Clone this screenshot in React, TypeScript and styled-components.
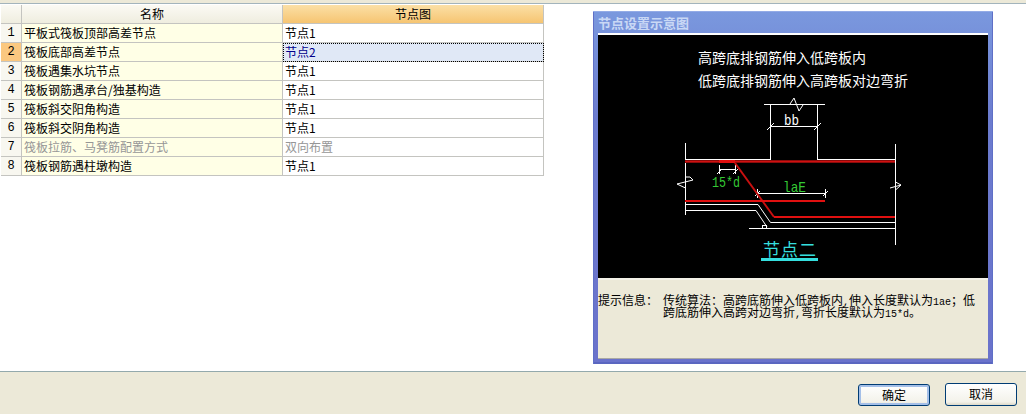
import React from 'react';
import styled, { createGlobalStyle } from 'styled-components';

const CJK = '"Noto Sans CJK SC", "Liberation Sans", sans-serif';
const MONO = '"Liberation Mono", monospace';

const GlobalStyle = createGlobalStyle`
  html, body {
    margin: 0;
    padding: 0;
    background: #ffffff;
    overflow: hidden;
  }
  body {
    font-family: ${CJK};
    font-size: 12px;
    color: #000000;
  }
`;

const Page = styled.div`
  width: 1026px;
  height: 414px;
  display: flex;
  flex-direction: column;
`;

const TopStrip = styled.div`
  height: 3px;
  background: #ece9d8;
  border-bottom: 1px solid #a3b4bc;
`;

const Main = styled.div`
  height: 367px;
  display: flex;
  align-items: flex-start;
`;

const Grid = styled.div`
  display: grid;
  grid-template-columns: 21px 261px 261px;
  grid-auto-rows: 19px;
  margin: 1px 0 0 1px;
`;

const HeaderCell = styled.div<{ $active?: boolean }>`
  border-right: 1px solid #c4c4c0;
  border-bottom: 1px solid #c4c4c0;
  background: ${(p) =>
    p.$active
      ? 'linear-gradient(#fbe0a6, #f6c572)'
      : 'linear-gradient(#fbfaf4, #efeddf)'};
  text-align: center;
  line-height: 17px;
`;

const RowNumber = styled.div<{ $selected?: boolean }>`
  border-right: 1px solid #c4c4c0;
  border-bottom: 1px solid #c4c4c0;
  background: ${(p) => (p.$selected ? '#fbc880' : '#f8f7f0')};
  text-align: center;
  font-family: ${MONO};
  font-size: 12px;
  line-height: 18px;
`;

const NameCell = styled.div<{ $disabled?: boolean }>`
  border-right: 1px solid #c4c4c0;
  border-bottom: 1px solid #c4c4c0;
  background: #ffffe6;
  padding-left: 2px;
  line-height: 17px;
  color: ${(p) => (p.$disabled ? '#969696' : '#000000')};
`;

const ValueCell = styled.div<{ $disabled?: boolean; $selected?: boolean }>`
  border-right: 1px solid #c4c4c0;
  border-bottom: 1px solid #c4c4c0;
  background: ${(p) => (p.$selected ? '#e0e8f6' : '#ffffff')};
  padding-left: 2px;
  line-height: 17px;
  color: ${(p) => (p.$selected ? '#00008b' : p.$disabled ? '#969696' : '#000000')};
  outline: ${(p) => (p.$selected ? '1px dotted #000000' : 'none')};
  outline-offset: -1px;
`;

const Panel = styled.div`
  width: 400px;
  height: 353px;
  margin: 7px 0 0 49px;
  padding: 0 5px 5px;
  box-sizing: border-box;
  display: flex;
  flex-direction: column;
  background: linear-gradient(#7a98de, #6c7ccf 30%, #6a72cb);
  border-top: 1px solid #93abe6;
  box-shadow: inset 1px 0 0 #5f6fc6, inset -1px 0 0 #5f6fc6, inset 0 -2px 0 #5a66c0;
`;

const PanelTitle = styled.div`
  height: 21px;
  line-height: 22px;
  font-size: 13px;
  font-weight: 700;
  color: #c9d8f5;
`;

const Diagram = styled.svg`
  display: block;
  flex: none;
  width: 390px;
  height: 243px;
  background: #000000;
  border-top: 2px solid #ffffff;
`;

const HintArea = styled.div`
  flex: 1;
  display: flex;
  background: #ece9d8;
  border-top: 2px solid #f4f2e8;
  border-bottom: 1px solid #a9a9a4;
  padding: 14px 0 0;
  line-height: 12px;
`;

const HintLabel = styled.div`
  width: 65px;
  flex: none;
`;

const HintBody = styled.div`
  flex: 1;
`;

const Latin = styled.span`
  font-family: ${MONO};
  font-size: 10px;
  line-height: 0;
`;

const Footer = styled.div`
  flex: 1;
  display: flex;
  justify-content: flex-end;
  align-items: flex-end;
  gap: 15px;
  padding: 0 9px 8px 0;
  background: #ece9d8;
  border-top: 1px solid #93a9ac;
`;

const DialogButton = styled.button<{ $primary?: boolean }>`
  width: 72px;
  height: ${(p) => (p.$primary ? '22px' : '23px')};
  padding: 0 0 2px;
  font-family: ${CJK};
  font-size: 12px;
  color: #000000;
  border: 1px solid #003c74;
  border-radius: 3px;
  background: linear-gradient(#ffffff, #f3f2ea 85%, #dcd8c8);
  box-shadow: ${(p) => (p.$primary ? 'inset 0 0 0 2px #a4bfe8' : 'none')};
`;

const rows = [
  { name: '平板式筏板顶部高差节点', value: '节点1' },
  { name: '筏板底部高差节点', value: '节点2', selected: true },
  { name: '筏板遇集水坑节点', value: '节点1' },
  { name: '筏板钢筋遇承台/独基构造', value: '节点1' },
  { name: '筏板斜交阳角构造', value: '节点1' },
  { name: '筏板斜交阴角构造', value: '节点1' },
  { name: '筏板拉筋、马凳筋配置方式', value: '双向布置', disabled: true },
  { name: '筏板钢筋遇柱墩构造', value: '节点1' },
];

const WHITE = '#ffffff';
const RED = '#e01010';
const GREEN = '#35c935';
const CYAN = '#35dede';

// viewBox uses screenshot coordinates so the drawing can be read off the picture
function NodeDiagram() {
  return (
    <Diagram viewBox="598 35 390 243" shapeRendering="crispEdges">
      <g fill={WHITE} fontFamily={CJK} fontSize="14">
        <text x="698" y="63">高跨底排钢筋伸入低跨板内</text>
        <text x="698" y="86">低跨底排钢筋伸入高跨板对边弯折</text>
      </g>

      <g stroke={WHITE} strokeWidth="1" fill="none">
        <path d="M763.5 104.5H824.5M770.5 104.5V159.5M817.5 104.5V159.5" />
        <path d="M790 104L794 98L799 111L803 105" shapeRendering="auto" />
        <path d="M770.5 126.5H817.5M767 130L774 123M814 130L821 123" />
        <path d="M685.5 143V215M895.5 144V245" />
        <path d="M685.5 159.5H770.5M817.5 159.5H895.5" />
        <path d="M677 184L693 180L690 177H685.5M677 184L685.5 188" shapeRendering="auto" />
        <path d="M890 188L901 185L895.5 182M895.5 190L901 185" shapeRendering="auto" />
        <path d="M719.5 165V174M735.5 165V174M719.5 169.5H735.5M717 174L722 169M733 174L738 169" />
        <path d="M757.5 189V198M825.5 189V198M757.5 193.5H825.5M755 196L760 191M823 196L828 191" />
        <path d="M685 204.5H758L770.5 222.5H895" shapeRendering="auto" />
        <path d="M685 210.5H756L767 227M749 228.5H895" shapeRendering="auto" />
        <path d="M762.5 228V225.5H766.5V228" />
      </g>

      <g fill="none">
        <path d="M685 161.5H895" stroke="#8a0c0c" strokeWidth="3" />
        <path d="M685 161.5H895" stroke="#d01010" strokeWidth="1" />
        <path d="M719 161.5H735" stroke={RED} strokeWidth="3" />
        <path d="M735 163L774 217" stroke="#c81010" strokeWidth="2" shapeRendering="auto" />
        <path d="M774 217H895" stroke={RED} strokeWidth="2" />
        <path d="M685 201H825" stroke={RED} strokeWidth="2" />
      </g>

      <text x="784" y="125" fill={WHITE} fontFamily={MONO} fontSize="14" textLength="15" lengthAdjust="spacingAndGlyphs">bb</text>

      <g fill={GREEN} fontFamily={MONO} fontSize="15" lengthAdjust="spacingAndGlyphs">
        <text x="712" y="187" textLength="28" lengthAdjust="spacingAndGlyphs">15*d</text>
        <text x="783" y="192" textLength="23" lengthAdjust="spacingAndGlyphs">laE</text>
      </g>

      <text x="763" y="256" fill={CYAN} fontFamily={CJK} fontSize="17" letterSpacing="1">节点二</text>
      <path d="M761 259.5H818" stroke={CYAN} strokeWidth="3" />
    </Diagram>
  );
}

export default function App() {
  return (
    <Page>
      <GlobalStyle />
      <TopStrip />
      <Main>
        <Grid>
          <HeaderCell />
          <HeaderCell>名称</HeaderCell>
          <HeaderCell $active>节点图</HeaderCell>
          {rows.map((row, i) => (
            <React.Fragment key={row.name}>
              <RowNumber $selected={row.selected}>{i + 1}</RowNumber>
              <NameCell $disabled={row.disabled}>{row.name}</NameCell>
              <ValueCell $disabled={row.disabled} $selected={row.selected}>
                {row.value}
              </ValueCell>
            </React.Fragment>
          ))}
        </Grid>
        <Panel>
          <PanelTitle>节点设置示意图</PanelTitle>
          <NodeDiagram />
          <HintArea>
            <HintLabel>提示信息：</HintLabel>
            <HintBody>
              传统算法：高跨底筋伸入低跨板内<Latin>,</Latin>伸入长度默认为<Latin>1ae</Latin>；低
              <br />
              跨底筋伸入高跨对边弯折<Latin>,</Latin>弯折长度默认为<Latin>15*d</Latin>。
            </HintBody>
          </HintArea>
        </Panel>
      </Main>
      <Footer>
        <DialogButton $primary>确定</DialogButton>
        <DialogButton>取消</DialogButton>
      </Footer>
    </Page>
  );
}
